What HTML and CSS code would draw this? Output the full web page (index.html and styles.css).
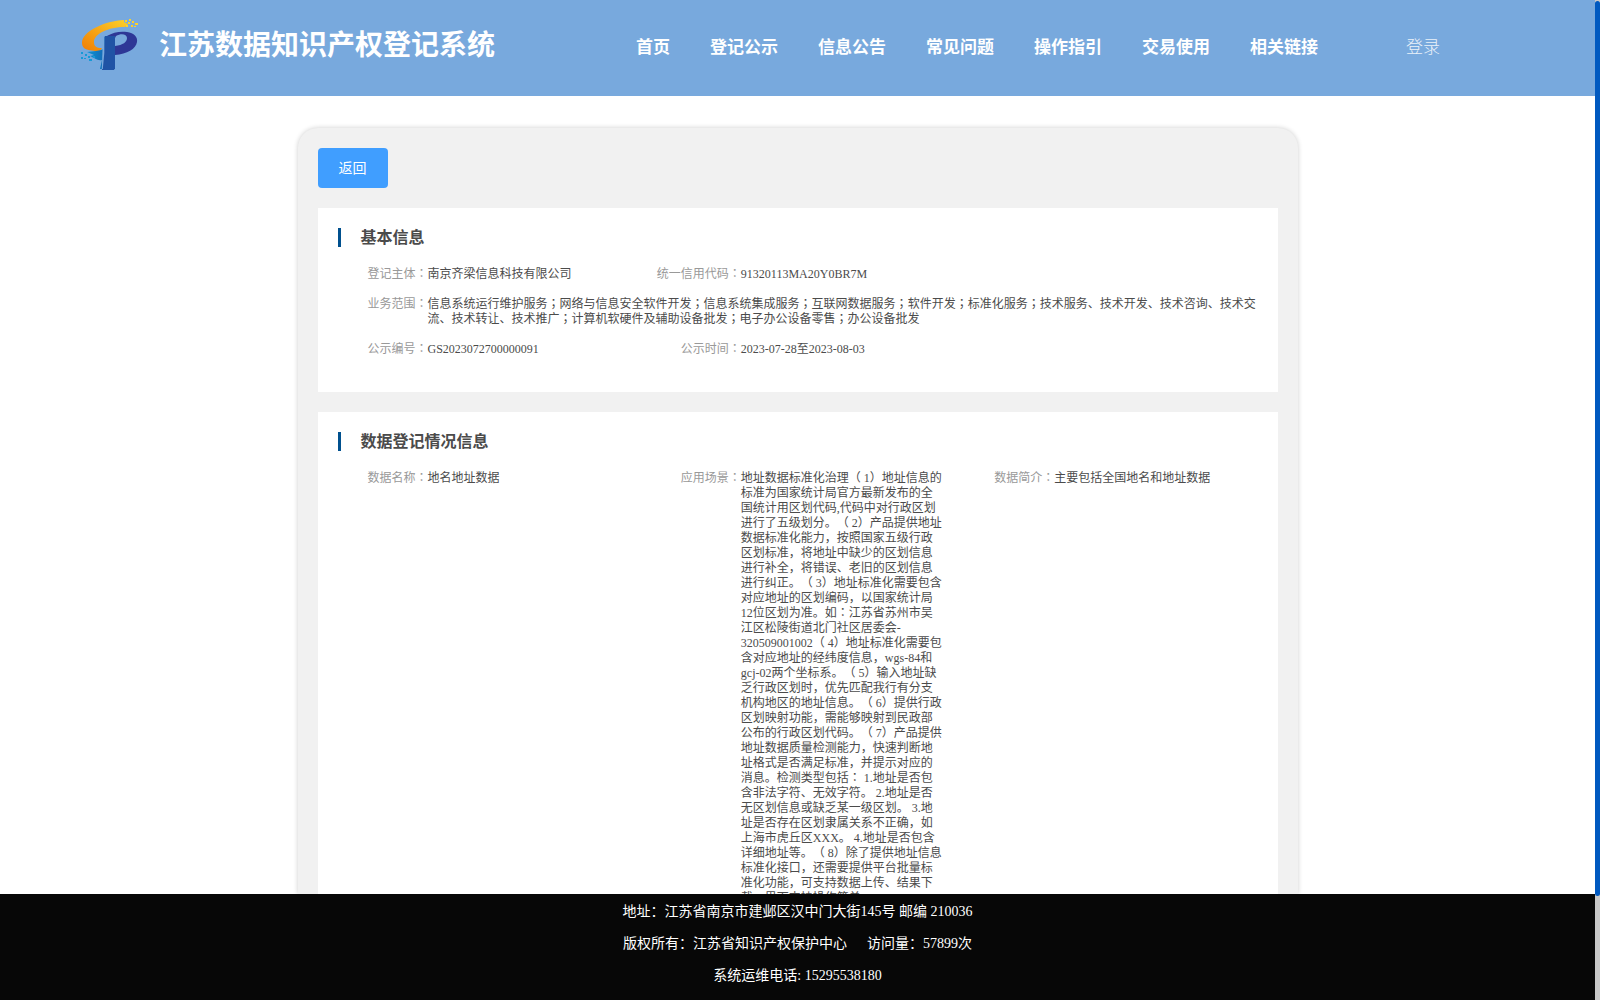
FILE: index.html
```html
<!DOCTYPE html>
<html lang="zh-CN">
<head>
<meta charset="utf-8">
<title>江苏数据知识产权登记系统</title>
<link rel="stylesheet" href="styles.css">
</head>
<body>
<div class="app">
  <div class="page">
    <header class="header">
      <svg class="logo" viewBox="0 0 60 54" width="60" height="54">
        <defs>
          <linearGradient id="gold" x1="0" y1="1" x2="1" y2="0"><stop offset="0" stop-color="#ef7d05"/><stop offset="1" stop-color="#fdd129"/></linearGradient>
          <linearGradient id="blue" x1="0" y1="0" x2="1" y2="0"><stop offset="0" stop-color="#0b94d4"/><stop offset="1" stop-color="#1b4fa3"/></linearGradient>
        </defs>
        <path fill="url(#gold)" d="M44 2C25 3 2 13 2 25c0 6 5 8 18 8l2-3c-6 0-8-2-8-6 0-8 14-15 31-15l3-3-4-2z"/>
        <path fill="#fdd129" d="M45 2h2v2h-2zM49 1h2v2h-2zM48 4h2v2h-2zM52 3h2v2h-2zM46 7h2v2h-2zM51 7h2v2h-2zM55 5h3v2h-3zM54 8h2v1h-2z"/>
        <path fill="url(#blue)" d="M7 34c6-1 12-1 17-3V20l-1-1 12-3v35H20l2-9c-5 1-7-2-12-4l4-1z"/>
        <path fill="#2e3796" d="M27 18c6-4 14-5 20-4 7 1 11 5 10 10-1 7-10 12-22 13v-9c8-1 12-4 12-8 0-4-6-5-11-2l-1 2-6-1z"/>
        <path fill="#2053a5" d="M25 18h10v32l-1 2H22z"/>
        <path fill="#78a9dd" d="M23 18h1.300v17l-1.500 16h-1z"/>
        <path fill="#169ad7" d="M1 34h2v2H1zM5 36h2v2H5zM8 38h2v2H8zM1 39h2v2H1zM4 40h2v1H4zM9 41h3v2H9zM13 38h2v2h-2z"/>
      </svg>
      <h1 class="site-name">江苏数据知识产权登记系统</h1>
      <nav class="nav">
        <a>首页</a><a>登记公示</a><a>信息公告</a><a>常见问题</a><a>操作指引</a><a>交易使用</a><a>相关链接</a>
      </nav>
      <a class="login">登录</a>
    </header>

    <main class="card">
      <button class="back">返回</button>

      <section class="panel">
        <h2 class="panel-title">基本信息</h2>
        <div class="row">
          <div class="field"><div class="label">登记主体<span class="mid" lang="zh-TW">：</span></div><div class="value">南京齐梁信息科技有限公司</div></div>
          <div class="field"><div class="label">统一信用代码<span class="mid" lang="zh-TW">：</span></div><div class="value">91320113MA20Y0BR7M</div></div>
        </div>
        <div class="row">
          <div class="field wide"><div class="label">业务范围<span class="mid" lang="zh-TW">：</span></div><div class="value">信息系统运行维护服务<span class="mid" lang="zh-TW">；</span>网络与信息安全软件开发<span class="mid" lang="zh-TW">；</span>信息系统集成服务<span class="mid" lang="zh-TW">；</span>互联网数据服务<span class="mid" lang="zh-TW">；</span>软件开发<span class="mid" lang="zh-TW">；</span>标准化服务<span class="mid" lang="zh-TW">；</span>技术服务、技术开发、技术咨询、技术交
流、技术转让、技术推广<span class="mid" lang="zh-TW">；</span>计算机软硬件及辅助设备批发<span class="mid" lang="zh-TW">；</span>电子办公设备零售<span class="mid" lang="zh-TW">；</span>办公设备批发</div></div>
        </div>
        <div class="row">
          <div class="field"><div class="label">公示编号<span class="mid" lang="zh-TW">：</span></div><div class="value">GS2023072700000091</div></div>
          <div class="field"><div class="label">公示时间<span class="mid" lang="zh-TW">：</span></div><div class="value">2023-07-28至2023-08-03</div></div>
        </div>
      </section>

      <section class="panel">
        <h2 class="panel-title">数据登记情况信息</h2>
        <div class="row">
          <div class="field"><div class="label">数据名称<span class="mid" lang="zh-TW">：</span></div><div class="value">地名地址数据</div></div>
          <div class="field"><div class="label">应用场景<span class="mid" lang="zh-TW">：</span></div><div class="value">地址数据标准化治理（ 1）地址信息的
标准为国家统计局官方最新发布的全
国统计用区划代码,代码中对行政区划
进行了五级划分。（ 2）产品提供地址
数据标准化能力，按照国家五级行政
区划标准，将地址中缺少的区划信息
进行补全，将错误、老旧的区划信息
进行纠正。（ 3）地址标准化需要包含
对应地址的区划编码，以国家统计局
12位区划为准。如<span class="mid" lang="zh-TW">：</span>江苏省苏州市吴
江区松陵街道北门社区居委会-
320509001002（ 4）地址标准化需要包
含对应地址的经纬度信息，wgs-84和
gcj-02两个坐标系。（ 5）输入地址缺
乏行政区划时，优先匹配我行有分支
机构地区的地址信息。（ 6）提供行政
区划映射功能，需能够映射到民政部
公布的行政区划代码。（ 7）产品提供
地址数据质量检测能力，快速判断地
址格式是否满足标准，并提示对应的
消息。检测类型包括<span class="mid" lang="zh-TW">：</span> 1.地址是否包
含非法字符、无效字符。 2.地址是否
无区划信息或缺乏某一级区划。 3.地
址是否存在区划隶属关系不正确，如
上海市虎丘区XXX。 4.地址是否包含
详细地址等。（ 8）除了提供地址信息
标准化接口，还需要提供平台批量标
准化功能，可支持数据上传、结果下
载，界面支持操作简单。</div></div>
          <div class="field"><div class="label">数据简介<span class="mid" lang="zh-TW">：</span></div><div class="value">主要包括全国地名和地址数据</div></div>
        </div>
      </section>
    </main>

    <footer class="footer">
      <p>地址：江苏省南京市建邺区汉中门大街145号 邮编 210036</p>
      <p>版权所有：江苏省知识产权保护中心<span class="visits">访问量：57899次</span></p>
      <p>系统运维电话: 15295538180</p>
    </footer>
  </div>
  <div class="scroll-track"><div class="scroll-thumb"></div></div>
</div>
</body>
</html>
```
FILE: styles.css
```css
* { box-sizing: border-box; }
body {
  margin: 0;
  font-family: "Liberation Serif", "Noto Sans CJK SC", serif;
  text-spacing-trim: space-all;
  color: #4b4b4b;
  background: #fff;
}
h1, h2, p { margin: 0; }
.app { display: flex; height: 1000px; overflow: hidden; }
.page { display: flex; flex-direction: column; width: 1595px; height: 1000px; }
.scroll-track { width: 5px; background: #c8c8c8; }
.scroll-thumb { height: 895px; margin-top: 1px; border-radius: 3px; background: #0059c0; }

.header {
  flex: none;
  display: flex;
  align-items: center;
  height: 96px;
  padding-left: 80px;
  background: #78a9dd;
  color: #fff;
}
.logo { flex: none; margin-bottom: 6px; }
.site-name {
  width: 477px;
  margin: 0 0 4px 19px;
  font-size: 28px;
  line-height: 40px;
  font-weight: 700;
  white-space: nowrap;
}
.nav { display: flex; gap: 40px; font-size: 17px; line-height: 24px; font-weight: 700; white-space: nowrap; margin-bottom: 1px; }
.login { margin: 0 0 1px 88px; font-size: 17px; line-height: 24px; font-weight: 300; opacity: .85; }

.card {
  flex: 1;
  min-height: 0;
  display: flex;
  flex-direction: column;
  gap: 20px;
  width: 1000px;
  margin: 32px auto 0;
  padding: 20px;
  overflow: hidden;
  border-radius: 20px 20px 0 0;
  background: #f1f1f1;
  box-shadow: 0 0 5px rgba(0, 0, 0, .2);
}
.back {
  flex: none;
  width: 70px;
  height: 40px;
  padding: 0 0 2px;
  border: 0;
  border-radius: 4px;
  background: #409eff;
  color: #fff;
  font: 14px "Liberation Serif", "Noto Sans CJK SC", serif;
}
.panel { flex: none; padding: 20px 0 20px 20px; background: #fff; }
.panel-title {
  height: 19px;
  margin-bottom: 20px;
  padding-left: 20px;
  border-left: 3px solid #00508e;
  font-size: 16px;
  line-height: 19px;
}
.row {
  display: grid;
  grid-template-columns: repeat(3, 1fr);
  margin-bottom: 15px;
  font-size: 12px;
  line-height: 15px;
}
.field { display: flex; }
.wide { grid-column: span 3; }
.label { flex: none; width: 90px; text-align: right; color: #999; white-space: nowrap; }
/* vertically centred colon and semicolon forms */
.mid { font-family: "Noto Sans CJK TC", sans-serif; line-height: 0; }
.value { white-space: pre; }

.footer {
  position: relative;
  flex: none;
  height: 106px;
  padding-top: 2px;
  background: #070707;
  color: #fff;
  font-size: 14px;
  line-height: 32px;
  text-align: center;
}
.visits { margin-left: 20px; }
```
